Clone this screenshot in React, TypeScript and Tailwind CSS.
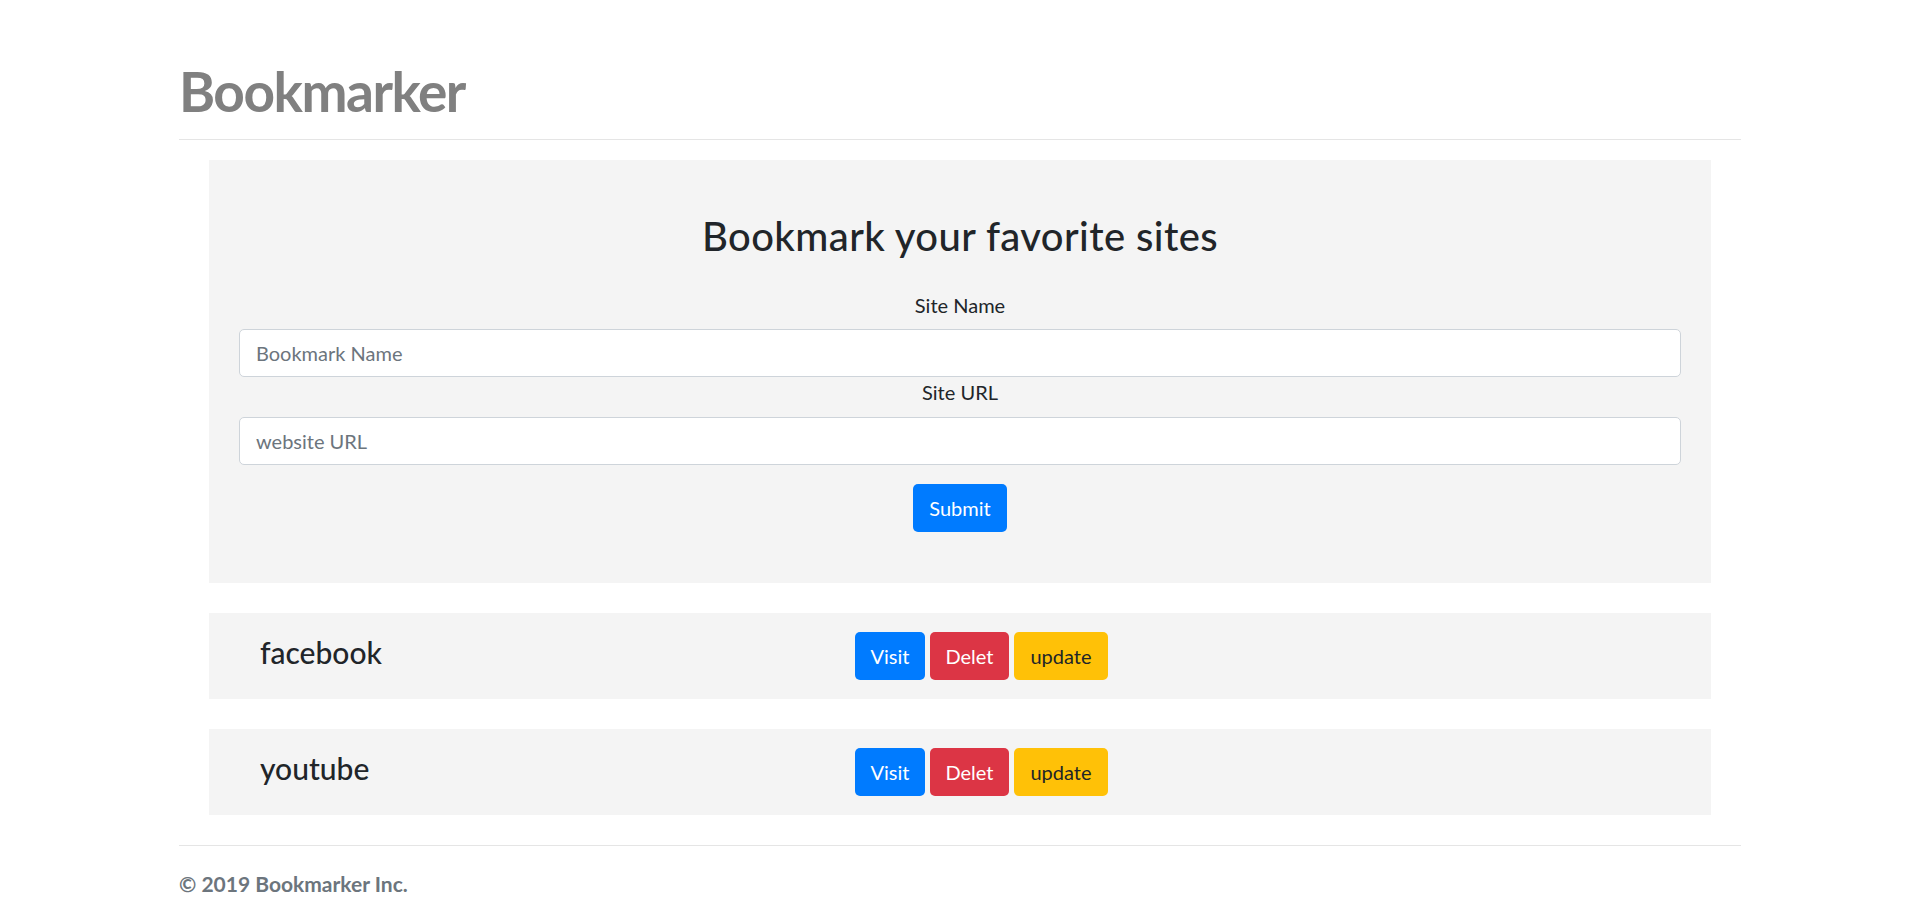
const bookmarks = [
  { name: "facebook", url: "https://facebook.com" },
  { name: "youtube", url: "https://youtube.com" },
];

export default function App() {
  return (
    <div className="min-h-screen bg-white text-[#212529] font-['Segoe_UI',Lato,'Open_Sans',sans-serif]">
      <div className="max-w-[1562px] mx-auto">
        <header className="pt-[58px] pb-[15px] border-b border-[#e5e5e5]">
          <h1 className="text-[55px] leading-[1.2] font-bold tracking-[-1.5px] text-[#808080]">Bookmarker</h1>
        </header>

        <main className="px-[30px] pt-[20px]">
          <div className="bg-[#f4f4f4] px-[30px] pt-[52px] pb-[51px] text-center">
            <h2 className="text-[40px] leading-[1.2] font-medium tracking-[0.4px] mb-[30px]">Bookmark your favorite sites</h2>
            <form>
              <label className="block text-[20px] leading-[1.5] mb-[9px]">Site Name</label>
              <input
                type="text"
                placeholder="Bookmark Name"
                className="block w-full h-[48px] px-4 text-[20px] bg-white border border-[#ced4da] rounded-[5px] placeholder:text-[#6c757d] outline-none"
              />
              <label className="block text-[20px] leading-[1.5] mb-[10px]">Site URL</label>
              <input
                type="text"
                placeholder="website URL"
                className="block w-full h-[48px] px-4 text-[20px] bg-white border border-[#ced4da] rounded-[5px] placeholder:text-[#6c757d] outline-none"
              />
              <button type="button" className="mt-[19px] h-[48px] px-4 text-[20px] text-white bg-[#007bff] rounded-[5px]">
                Submit
              </button>
            </form>
          </div>

          <div className="mt-[30px] flex flex-col gap-[30px]">
            {bookmarks.map(b => (
              <div key={b.name} className="bg-[#f4f4f4] h-[86px] flex items-center pl-[51px]">
                <h3 className="w-[595px] text-[30px] leading-[1.2] font-medium mb-[8px]">{b.name}</h3>
                <div className="flex gap-[5px]">
                  <button className="w-[70px] h-[48px] text-[20px] text-white bg-[#007bff] rounded-[5px]">Visit</button>
                  <button className="w-[79px] h-[48px] text-[20px] text-white bg-[#dc3545] rounded-[5px]">Delet</button>
                  <button className="w-[94px] h-[48px] text-[20px] text-[#212529] bg-[#ffc107] rounded-[5px]">update</button>
                </div>
              </div>
            ))}
          </div>
        </main>

        <footer className="mt-[30px] border-t border-[#e5e5e5] pt-[22px]">
          <p className="text-[21px] font-bold text-[#6c757d]">© 2019 Bookmarker Inc.</p>
        </footer>
      </div>
    </div>
  );
}
